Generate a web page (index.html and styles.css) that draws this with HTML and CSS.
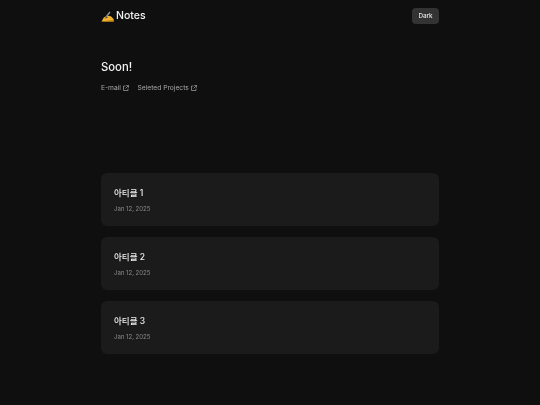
FILE: index.html
```html
<!DOCTYPE html>
<html lang="ko">
<head>
<meta charset="utf-8">
<title>Notes</title>
<link rel="stylesheet" href="styles.css">
</head>
<body>
<div class="page">
  <header class="header">
    <h1 class="logo">
      <svg class="logo-icon" width="14" height="14" viewBox="0 0 14 14" aria-hidden="true">
        <path d="M0.5 12.5 L2.8 8.5 L6 6.8 L9.8 7.2 L12.6 10 L12.6 12.5 Z" fill="#f2b230"/>
        <path d="M0.5 12.5 L12.6 10.8 L12.6 12.5 Z" fill="#c98a1c"/>
        <path d="M5.5 7.5 L9 3" stroke="#8a8f96" stroke-width="1.5" fill="none"/>
        <path d="M3.8 9.8 L5.4 7.4 L6.8 8.4 Z" fill="#3b3f45"/>
      </svg>
      <span>Notes</span>
    </h1>
    <button class="theme-btn" type="button">Dark</button>
  </header>
  <section class="intro">
    <h2 class="intro-title">Soon!</h2>
    <nav class="links">
      <a class="link" href="#">E-mail
        <svg class="ext" width="6" height="6" viewBox="0 0 6 6" aria-hidden="true"><path d="M2.4 1H.5v4.5H5V3.6M3.2 .4h2.4v2.4M5.5 .5 2.5 3.5" fill="none" stroke="currentColor" stroke-width=".7"/></svg>
      </a>
      <a class="link" href="#">Seleted Projects
        <svg class="ext" width="6" height="6" viewBox="0 0 6 6" aria-hidden="true"><path d="M2.4 1H.5v4.5H5V3.6M3.2 .4h2.4v2.4M5.5 .5 2.5 3.5" fill="none" stroke="currentColor" stroke-width=".7"/></svg>
      </a>
    </nav>
  </section>
  <main class="list">
    <article class="card"><h3 class="card-title">아티클 1</h3><p class="card-date">Jan 12, 2025</p></article>
    <article class="card"><h3 class="card-title">아티클 2</h3><p class="card-date">Jan 12, 2025</p></article>
    <article class="card"><h3 class="card-title">아티클 3</h3><p class="card-date">Jan 12, 2025</p></article>
  </main>
</div>
</body>
</html>
```
FILE: styles.css
```css
* { box-sizing: border-box; }
html, body { margin: 0; padding: 0; background: #0f0f0f; }
body { font-family: "Inter", "Noto Sans CJK KR", sans-serif; color: #f5f5f5; }
.page { width: 338px; margin: 0 auto; height: 405px; overflow: hidden; will-change: transform; }
.header { height: 32px; display: flex; justify-content: space-between; align-items: center; }
.logo { margin: 0; display: flex; align-items: center; gap: 1px; font-size: 10.5px; font-weight: 500; line-height: 16px; color: #f2f2f2; }
.logo-icon { display: block; }
.theme-btn { width: 27px; height: 16px; padding: 0; border: 0; border-radius: 4px; background: #333; color: #e8e8e8; font: 500 6.3px "Inter", sans-serif; }
.intro { padding-top: 27px; }
.intro-title { margin: 0; font-size: 11.3px; font-weight: 500; line-height: 16px; color: #f2f2f2; }
.links { display: flex; gap: 8px; margin-top: 7.5px; }
.link { display: flex; align-items: center; gap: 2.5px; font-size: 6.7px; line-height: 10px; color: #a8a8a8; text-decoration: none; }
.ext { display: block; }
.list { display: flex; flex-direction: column; gap: 11px; margin-top: 80.5px; }
.card { height: 53px; padding: 14px 13px 0; border-radius: 6px; background: #1b1b1b; }
.card-title { margin: 0; font-size: 8.5px; font-weight: 500; line-height: 13px; color: #eeeeee; }
.card-date { margin: 3.5px 0 0; font-size: 6px; line-height: 9px; color: #8a8a8a; }
```
